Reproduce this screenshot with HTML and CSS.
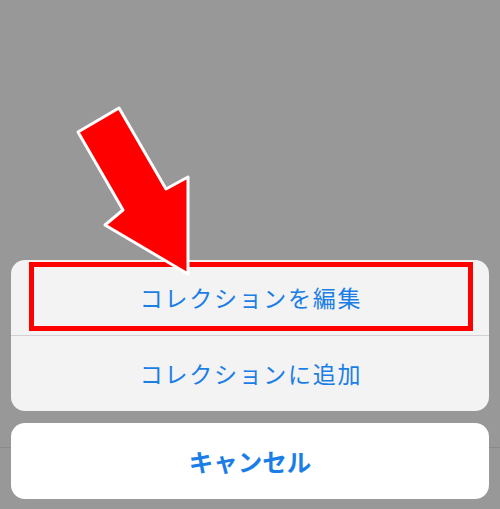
FILE: index.html
```html
<!DOCTYPE html>
<html lang="ja">
<head>
<meta charset="utf-8">
<link rel="stylesheet" href="styles.css">
</head>
<body>
<div class="screen">
  <div class="sheet">
    <div class="group">
      <div class="action highlighted">コレクションを編集<span class="mark"></span></div>
      <div class="sep"></div>
      <div class="action">コレクションに追加</div>
    </div>
    <div class="cancel">キャンセル</div>
  </div>
  <svg class="arrow" width="500" height="509" viewBox="0 0 500 509">
    <polygon points="78,132 119,108 166,189 188,177 188,274 105,225 123,210" fill="#ff0000" stroke="#ffffff" stroke-width="3" stroke-linejoin="round"/>
  </svg>
</div>
</body>
</html>
```
FILE: styles.css
```css
html, body {
  margin: 0;
  padding: 0;
}
body {
  width: 500px;
  height: 509px;
  overflow: hidden;
  font-family: "Noto Sans CJK JP", "Noto Sans", sans-serif;
}
.screen {
  position: relative;
  width: 500px;
  height: 509px;
  background: linear-gradient(to bottom, transparent 447px, #8a8a8a 447px, #8a8a8a 448px, transparent 448px), #989898;
  display: flex;
  flex-direction: column;
  justify-content: flex-end;
}
.sheet {
  display: flex;
  flex-direction: column;
  gap: 12px;
  padding: 0 11px 10px 11px;
}
.group {
  background: #f3f3f3;
  border-radius: 14px;
  overflow: hidden;
  display: flex;
  flex-direction: column;
}
.action {
  position: relative;
  height: 75px;
  display: flex;
  align-items: center;
  justify-content: center;
  color: #1a7ee6;
  font-size: 23px;
  letter-spacing: 1.7px;
  padding-left: 2px;
  padding-bottom: 1px;
  box-sizing: border-box;
}
.sep {
  height: 1px;
  background: #d2d0d6;
}
.mark {
  position: absolute;
  left: 18px;
  right: 16px;
  top: 2px;
  bottom: 4px;
  border: 5px solid #ff0000;
  box-sizing: border-box;
}
.cancel {
  height: 76px;
  background: #ffffff;
  border-radius: 14px;
  display: flex;
  align-items: center;
  justify-content: center;
  color: #1a7ee6;
  font-size: 24.5px;
  font-weight: 700;
}
.arrow {
  position: absolute;
  left: 0;
  top: 0;
  pointer-events: none;
}
```
